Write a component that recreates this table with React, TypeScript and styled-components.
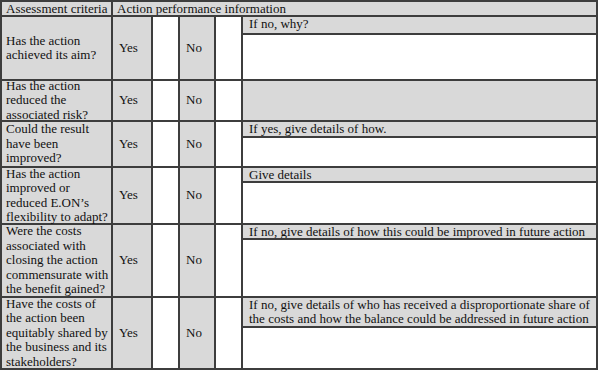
import React from "react";
import styled, { createGlobalStyle } from "styled-components";

const GlobalStyle = createGlobalStyle`
  html, body {
    margin: 0;
    padding: 0;
    background: #ffffff;
  }
  body {
    font-family: "Liberation Serif", "Times New Roman", serif;
    color: #111111;
  }
`;

interface IRow {
  question: string;
  note?: string;
  noteHeight?: number;
  height: number;
}

const rows: IRow[] = [
  {
    question: "Has the action achieved its aim?",
    note: "If no, why?",
    noteHeight: 16,
    height: 62,
  },
  { question: "Has the action reduced the associated risk?", height: 39 },
  {
    question: "Could the result have been improved?",
    note: "If yes, give details of how.",
    noteHeight: 14,
    height: 44,
  },
  {
    question: "Has the action improved or reduced E.ON\u2019s flexibility to adapt?",
    note: "Give details",
    noteHeight: 13,
    height: 55,
  },
  {
    question:
      "Were the costs associated with closing the action commensurate with the benefit gained?",
    note: "If no, give details of how this could be improved in future action",
    noteHeight: 13,
    height: 71,
  },
  {
    question:
      "Have the costs of the action been equitably shared by the business and its stakeholders?",
    note:
      "If no, give details of who has received a disproportionate share of the costs and how the balance could be addressed in future action",
    noteHeight: 28,
    height: 70,
  },
];

const App: React.FC = () => {
  return (
    <>
      <GlobalStyle />
      <Table>
        <HeadCell>Assessment criteria</HeadCell>
        <HeadCell span={5}>Action performance information</HeadCell>
        {rows.map((row, i) => (
          <React.Fragment key={i}>
            <Question style={{ height: row.height }}>{row.question}</Question>
            <Answer>Yes</Answer>
            <Tick />
            <Answer>No</Answer>
            <Tick />
            {row.note ? (
              <Details>
                <Note style={{ height: row.noteHeight }}>{row.note}</Note>
                <Blank />
              </Details>
            ) : (
              <EmptyDetails />
            )}
          </React.Fragment>
        ))}
      </Table>
    </>
  );
};

const Table = styled.div`
  display: grid;
  grid-template-columns: 109px 38px 25px 34px 25px 353px;
  gap: 2px;
  padding: 2px;
  width: 594px;
  margin-top: 0;
  background: #3d3d3d;
  font-size: 13px;
  line-height: 14.4px;
`;

const HeadCell = styled.div<{ span?: number }>`
  grid-column: span ${({ span }) => span || 1};
  background: #d9d9d9;
  height: 13px;
  padding: 0 0 0 4px;
  line-height: 13px;
  white-space: nowrap;
  overflow: hidden;
`;

const Question = styled.div`
  background: #d9d9d9;
  padding: 0 2px 0 4px;
  display: flex;
  align-items: center;
  box-sizing: border-box;
`;

const Answer = styled.div`
  background: #d9d9d9;
  display: flex;
  align-items: center;
  padding-left: 6px;
`;

const Tick = styled.div`
  background: #ffffff;
`;

const Details = styled.div`
  display: flex;
  flex-direction: column;
  gap: 2px;
  background: #3d3d3d;
`;

const Note = styled.div`
  background: #d9d9d9;
  padding: 0 0 0 6px;
  line-height: 14px;
  flex: none;
  overflow: hidden;
`;

const Blank = styled.div`
  background: #ffffff;
  flex: 1;
`;

const EmptyDetails = styled.div`
  background: #d9d9d9;
`;

export default App;
